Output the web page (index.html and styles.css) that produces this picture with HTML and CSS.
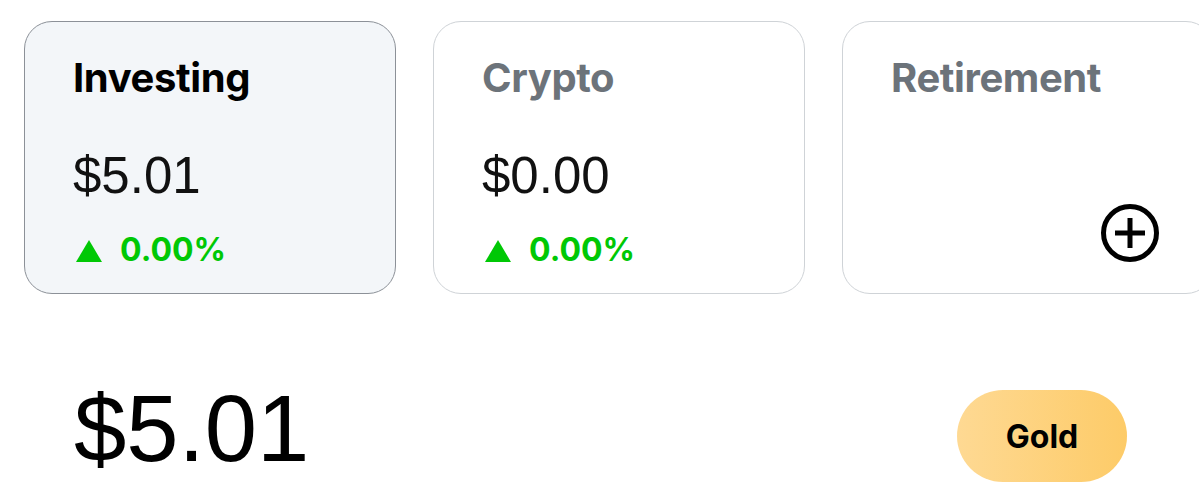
FILE: index.html
```html
<!DOCTYPE html>
<html>
<head>
<meta charset="utf-8">
<link rel="stylesheet" href="styles.css">
</head>
<body>
<div class="cards">
  <div class="card card-active">
    <div class="card-title">Investing</div>
    <div class="card-amount">$5.01</div>
    <div class="card-change">
      <svg class="tri" width="26" height="22" viewBox="0 0 26 22"><polygon points="13,0 26,22 0,22" fill="#00c805"/></svg>
      <span>0.00%</span>
    </div>
  </div>
  <div class="card">
    <div class="card-title muted">Crypto</div>
    <div class="card-amount">$0.00</div>
    <div class="card-change">
      <svg class="tri" width="26" height="22" viewBox="0 0 26 22"><polygon points="13,0 26,22 0,22" fill="#00c805"/></svg>
      <span>0.00%</span>
    </div>
  </div>
  <div class="card card-add">
    <div class="card-title muted">Retirement</div>
    <svg class="plus" width="60" height="60" viewBox="0 0 60 60">
      <circle cx="30" cy="30" r="26.5" fill="none" stroke="#000" stroke-width="5"/>
      <path d="M30 15 V45 M15 30 H45" stroke="#000" stroke-width="5" fill="none"/>
    </svg>
  </div>
</div>
<div class="summary">
  <div class="total">$5.01</div>
  <button class="gold">Gold</button>
</div>
</body>
</html>
```
FILE: styles.css
```css
html, body {
  margin: 0;
  padding: 0;
  background: #fff;
  width: 1199px;
  height: 500px;
  overflow: hidden;
}
.cards {
  display: flex;
  gap: 37px;
  padding: 21px 0 0 24px;
  overflow: hidden;
}
.card {
  box-sizing: border-box;
  flex: 0 0 372px;
  height: 273px;
  border: 1.5px solid #cfd3d7;
  border-radius: 28px;
  background: #fff;
  padding: 32px 0 0 48px;
  position: relative;
}
.card-active {
  background: #f3f6f9;
  border-color: #8c9198;
}
.card-title {
  font-family: Inter, "Liberation Sans", sans-serif;
  font-weight: 700;
  font-size: 40px;
  line-height: 48px;
  color: #000;
  letter-spacing: -0.4px;
}
.card-title.muted {
  color: #6c737a;
}
.card-amount {
  margin-top: 46px;
  font-family: "Liberation Sans", Arial, sans-serif;
  font-size: 51px;
  line-height: 55px;
  color: #111;
}
.card-change {
  margin-top: 26px;
  display: flex;
  align-items: center;
  gap: 18px;
  font-family: Inter, "Liberation Sans", sans-serif;
  font-weight: 700;
  font-size: 32px;
  line-height: 41px;
  color: #00c805;
}
.tri {
  margin-left: 3px;
  margin-top: 2px;
}
.plus {
  position: absolute;
  right: 53px;
  bottom: 30px;
}
.summary {
  display: flex;
  justify-content: space-between;
  align-items: flex-start;
  margin-top: 82px;
  padding: 0 72px 0 74px;
}
.total {
  font-family: "Liberation Sans", Arial, sans-serif;
  font-size: 94px;
  line-height: 106px;
  color: #000;
}
.gold {
  margin-top: 14px;
  width: 170px;
  height: 92px;
  border: none;
  border-radius: 46px;
  background: linear-gradient(90deg, #fed993 0%, #fdcb68 100%);
  font-family: Inter, "Liberation Sans", sans-serif;
  font-weight: 700;
  font-size: 32px;
  color: #000;
  cursor: pointer;
  padding: 0;
}
```
